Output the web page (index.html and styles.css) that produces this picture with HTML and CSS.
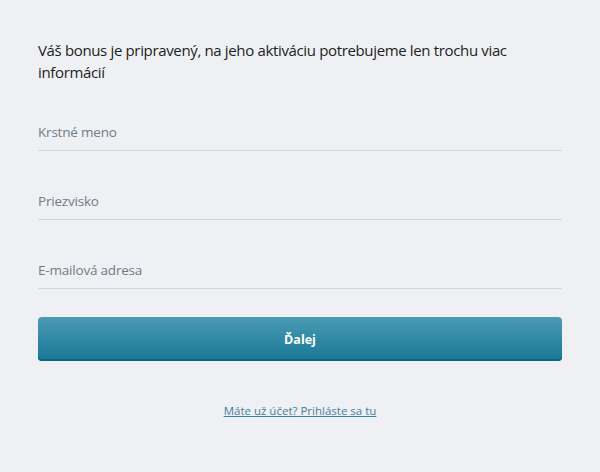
FILE: index.html
```html
<!DOCTYPE html>
<html lang="sk">
<head>
<meta charset="utf-8">
<link rel="stylesheet" href="styles.css">
</head>
<body>
<main class="form">
  <h1 class="title">Váš bonus je pripravený, na jeho aktiváciu potrebujeme len trochu viac informácií</h1>
  <div class="field"><span class="label">Krstné meno</span></div>
  <div class="field"><span class="label">Priezvisko</span></div>
  <div class="field"><span class="label">E-mailová adresa</span></div>
  <button class="btn">Ďalej</button>
  <a class="login" href="#">Máte už účet? Prihláste sa tu</a>
</main>
</body>
</html>
```
FILE: styles.css
```css
html, body {
  margin: 0;
  padding: 0;
  background: #eff0f3;
}
body {
  font-family: "Open Sans", "Noto Sans", sans-serif;
  color: #1c1e22;
}
.form {
  width: 524px;
  margin: 0 auto;
  padding-top: 39px;
  display: flex;
  flex-direction: column;
}
.title {
  margin: 0;
  font-size: 15px;
  font-weight: 400;
  line-height: 22px;
  letter-spacing: -0.35px;
}
.field {
  height: 36px;
  border-bottom: 1px solid #d3d6dc;
  display: flex;
  align-items: center;
  margin-top: 32px;
}
.field:first-of-type { margin-top: 31px; }
.label {
  font-size: 13.5px;
  letter-spacing: -0.2px;
  color: #6f7c88;
}
.btn {
  margin-top: 28px;
  height: 44px;
  border: 0;
  border-radius: 4px;
  background: linear-gradient(#4a9bb3, #177796);
  color: #fff;
  font-family: inherit;
  font-size: 12.5px;
  font-weight: 700;
  box-shadow: inset 0 -2px 0 #0d6485;
}
.login {
  align-self: center;
  margin-top: 42px;
  font-size: 11.5px;
  color: #3e7f9f;
}
```
